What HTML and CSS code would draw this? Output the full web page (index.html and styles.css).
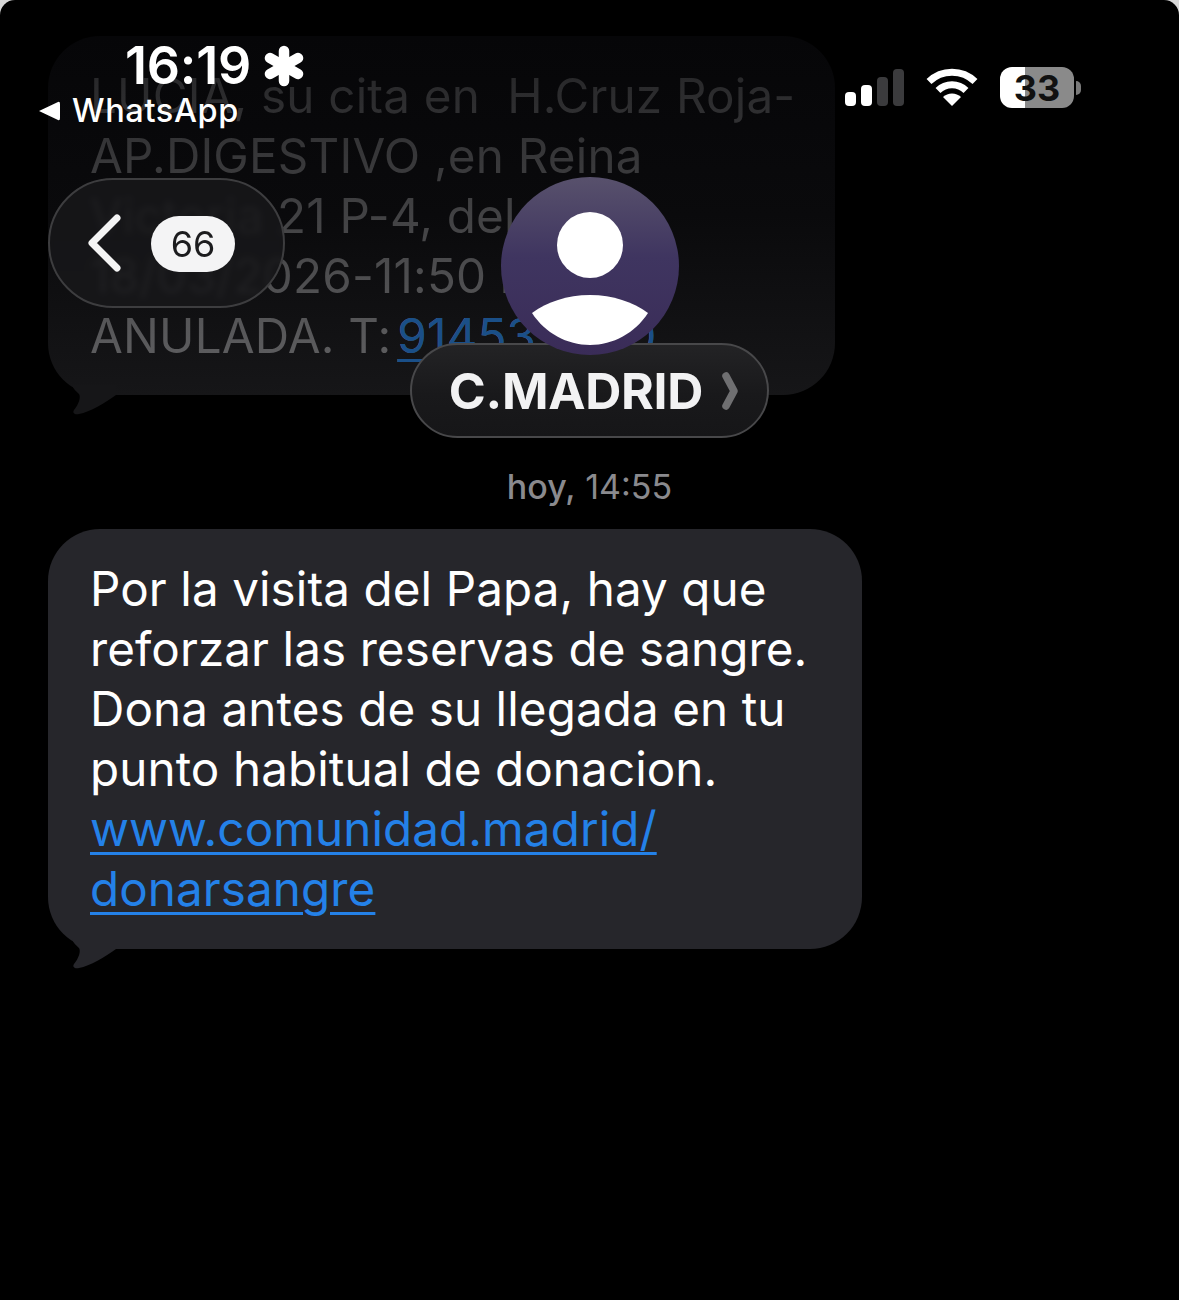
FILE: index.html
```html
<!doctype html>
<html lang="es">
<head>
	<meta charset="UTF-8">
	<title>C.MADRID</title>
	<link rel="stylesheet" href="styles.css">
</head>
<body>
	<div class="screen">
		<div class="thread">
			<div class="bubble bubble-old">
				<p class="old-text">LUCIA, su cita en  H.Cruz Roja-<br>AP.DIGESTIVO ,en Reina<br>Victoria 21 P-4, del<br>18/03/2026-11:50 ha sido<br>ANULADA. T:<a href="#" class="old-link">914533000</a></p>
				<svg class="tail" width="44" height="30" viewBox="0 0 44 30"><path d="M0 0 C1 4 5 7 7 9 C9 12 7 19 2 25 C0 28 3 30 7 29 C18 27 33 18 44 10 L44 0 Z" fill="#161618"/></svg>
			</div>
			<div class="stamp"><b>hoy,</b> 14:55</div>
			<div class="bubble bubble-new">
				<p>Por la visita del Papa, hay que<br>reforzar las reservas de sangre.<br>Dona antes de su llegada en tu<br>punto habitual de donacion.<br><a href="#" class="msg-link">www.comunidad.madrid/</a><br><a href="#" class="msg-link">donarsangre</a></p>
				<svg class="tail" width="44" height="30" viewBox="0 0 44 30"><path d="M0 0 C1 4 5 7 7 9 C9 12 7 19 2 25 C0 28 3 30 7 29 C18 27 33 18 44 10 L44 0 Z" fill="#26262b"/></svg>
			</div>
		</div>

		<div class="status">
			<div class="status-left">
				<div class="clock">
					<span>16:19</span>
					<svg width="40" height="42" viewBox="0 0 40 42"><g stroke="#fff" stroke-width="10.5" stroke-linecap="round"><path d="M20 6V36"/><path d="M6 13L34 29"/><path d="M34 13L6 29"/></g></svg>
				</div>
				<div class="back-app">
					<svg width="22" height="20" viewBox="0 0 22 20"><path d="M1 10 L20 1 Q22 0 22 3 V17 Q22 20 20 19 Z" fill="#fff"/></svg>
					<span>WhatsApp</span>
				</div>
			</div>
			<div class="status-right">
				<div class="signal">
					<i class="bar bar-1"></i>
					<i class="bar bar-2"></i>
					<i class="bar bar-3"></i>
					<i class="bar bar-4"></i>
				</div>
				<svg class="wifi" width="52" height="38" viewBox="0 0 52 38"><g fill="none" stroke="#fff" stroke-width="7"><path d="M3 13.5 A33 33 0 0 1 49 13.5"/><path d="M12 22.5 A20 20 0 0 1 40 22.5"/></g><path d="M26 38 L17 29 A13 13 0 0 1 35 29 Z" fill="#fff"/></svg>
				<div class="battery">
					<div class="battery-body"><span>33</span></div>
					<i class="battery-nib"></i>
				</div>
			</div>
		</div>

		<div class="nav">
			<div class="back-pill">
				<svg width="36" height="58" viewBox="0 0 36 58"><path d="M31 4 L6 29 L31 54" fill="none" stroke="#f4f4f4" stroke-width="7" stroke-linecap="round" stroke-linejoin="round"/></svg>
				<span class="badge">66</span>
			</div>
			<div class="contact">
				<div class="avatar">
					<svg width="178" height="178" viewBox="0 0 178 178"><circle cx="89" cy="68" r="33" fill="#fff"/><path d="M31 136 C46 125 66 118 89 118 C112 118 132 125 147 136 C134 156 112 168 89 168 C66 168 44 156 31 136 Z" fill="#fff"/></svg>
				</div>
				<div class="name-pill">
					<span class="name">C.MADRID</span>
					<svg width="16" height="38" viewBox="0 0 16 38"><path d="M4 4 L12 19 L4 34" fill="none" stroke="#6f6f71" stroke-width="7.5" stroke-linecap="round" stroke-linejoin="round"/></svg>
				</div>
			</div>
		</div>
	</div>
</body>
</html>
```

FILE: styles.css
```css
html,body{margin:0;padding:0;background:#d8d8d8;}
body{font-family:"Inter","Liberation Sans",sans-serif;color:#fff;}
p{margin:0;white-space:pre;}

.screen{position:relative;width:1179px;height:1300px;background:#000;border-radius:15px 15px 0 0;overflow:hidden;}

/* mensajes */
.thread{display:flex;flex-direction:column;align-items:flex-start;padding:36px 0 0 48px;}
.bubble{position:relative;box-sizing:border-box;border-radius:52px;padding:30px 40px 28px 43px;font-size:47.6px;line-height:60px;letter-spacing:0.08px;}
.bubble p{margin-left:-1px;}
.bubble-old{width:787px;height:359px;letter-spacing:0.18px;background:linear-gradient(#060608 0%,#0a0a0c 50%,#161618 100%);}
.bubble-new{width:814px;height:420px;background:#26262b;color:#fff;}
.old-text{background:linear-gradient(#262628 0%,#5e5e60 100%);-webkit-background-clip:text;background-clip:text;color:transparent;}
.old-link{margin-left:6px;color:#1a4f88;text-decoration:underline;text-decoration-thickness:3px;text-underline-offset:6px;}
.msg-link{color:#2481e8;text-decoration:underline;text-decoration-thickness:3px;text-underline-offset:6px;}
.tail{position:absolute;left:24px;bottom:-20px;}
.stamp{align-self:stretch;margin:0 48px 0 0;padding:72px 0 22px;font-size:34px;line-height:40px;text-align:center;color:#8a8a8e;}
.stamp b{font-weight:500;}

/* barra de estado */
.status{position:absolute;top:0;left:0;right:0;display:flex;justify-content:space-between;align-items:flex-start;padding:36px 98px 0 38px;}
.status-left{display:flex;flex-direction:column;}
.clock{display:flex;align-items:center;gap:13px;padding-left:87px;font-size:52px;line-height:60px;font-weight:600;letter-spacing:-0.2px;}
.back-app{display:flex;align-items:center;gap:12px;font-size:32.5px;line-height:36px;font-weight:500;letter-spacing:0.6px;margin-top:-3px;}
.status-right{display:flex;align-items:flex-end;gap:22px;padding-top:31px;}
.signal{display:flex;align-items:flex-end;gap:5px;height:37px;}
.bar{display:block;width:11px;border-radius:4px;background:#fff;}
.bar-1{height:14px;}
.bar-2{height:21px;}
.bar-3{height:29px;background:#3b3b3d;}
.bar-4{height:37px;background:#3b3b3d;}
.wifi{display:block;}
.battery{display:flex;align-items:center;gap:2px;margin-bottom:-2px;}
.battery-body{display:flex;align-items:center;justify-content:center;width:74px;height:41px;border-radius:12px;background:linear-gradient(90deg,#fff 34%,#8a8a8a 34%);color:#111;font-size:36px;font-weight:700;letter-spacing:0;}
.battery-nib{display:block;width:5px;height:14px;border-radius:0 7px 7px 0;background:#7a7a7a;}

/* navegacion */
.nav{position:absolute;top:177px;left:0;right:0;display:grid;grid-template-columns:1fr auto 1fr;}
.back-pill{display:flex;align-items:center;gap:29px;box-sizing:border-box;width:237px;height:130px;margin:1px 0 0 48px;padding-left:36px;border:2px solid #3d3d3f;border-radius:65px;background:rgba(24,24,26,0.85);-webkit-backdrop-filter:blur(3px);backdrop-filter:blur(3px);}
.back-pill svg{flex:none;}
.badge{display:block;width:84px;height:56px;margin-top:2px;border-radius:28px;background:#f4f4f5;color:#1c1c1e;font-size:36px;line-height:56px;text-align:center;}
.contact{grid-column:2;display:flex;flex-direction:column;align-items:center;width:359px;}
.avatar{position:relative;z-index:1;width:178px;height:178px;border-radius:50%;background:linear-gradient(#58516c 0%,#3f3560 45%,#3a2c58 100%);}
.avatar svg{display:block;}
.name-pill{display:flex;align-items:center;justify-content:center;gap:19px;box-sizing:border-box;width:359px;height:95px;margin-top:-12px;padding-left:8px;border:2px solid #48484a;border-radius:48px;background:linear-gradient(#232325,#19191b 55%,#161618);}
.name{font-size:50px;font-weight:700;letter-spacing:-0.3px;color:#f2f2f3;}
```
